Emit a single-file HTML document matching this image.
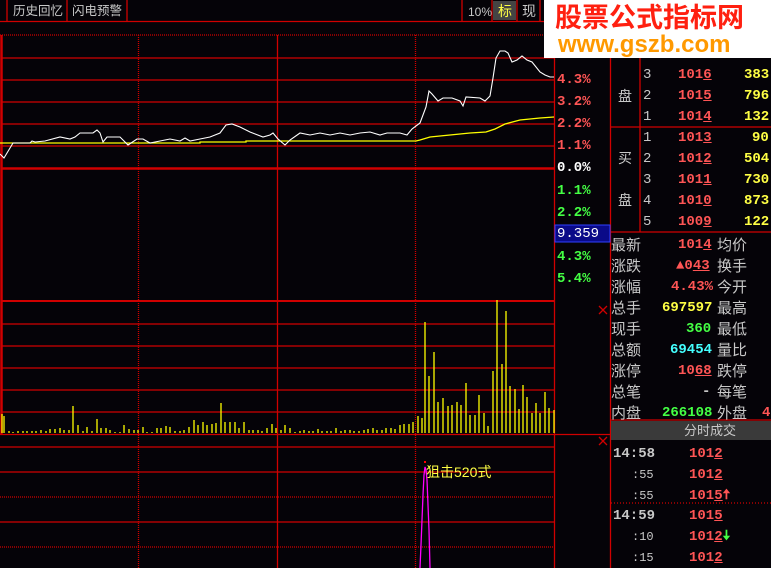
<!DOCTYPE html>
<html><head><meta charset="utf-8"><style>
body{margin:0;width:771px;height:568px;background:#050308;overflow:hidden;position:relative;font-family:"Liberation Sans","Noto Sans CJK SC",sans-serif;}
.t{position:absolute;white-space:nowrap;font-size:14px;line-height:16px;}
.g{color:#c8c8c8}.r{color:#ff5555}.y{color:#ffff44}.gr{color:#44ff44}.c{color:#44ffff}.w{color:#fff}
.n{font-family:"Liberation Mono","DejaVu Sans Mono",monospace;font-weight:bold;font-size:14px;}
u{text-decoration:underline;text-decoration-color:#ff5555}
</style></head><body>
<svg width="771" height="568" style="position:absolute;left:0;top:0">
<g stroke="#d00000" stroke-width="1.3" fill="none">
<line x1="0" y1="21.5" x2="610" y2="21.5"/>
<line x1="7" y1="0" x2="7" y2="21"/><line x1="67" y1="0" x2="67" y2="21"/><line x1="127" y1="0" x2="127" y2="21"/>
<line x1="462" y1="0" x2="462" y2="21"/><line x1="492" y1="0" x2="492" y2="21"/><line x1="517" y1="0" x2="517" y2="21"/><line x1="540" y1="0" x2="540" y2="21"/>
<line x1="0" y1="35" x2="555" y2="35" stroke-dasharray="1 1"/>
<line x1="2" y1="58" x2="555" y2="58"/><line x1="2" y1="80" x2="555" y2="80"/><line x1="2" y1="102" x2="555" y2="102"/><line x1="2" y1="124" x2="555" y2="124"/><line x1="2" y1="146" x2="555" y2="146"/>
<line x1="2" y1="168.5" x2="555" y2="168.5" stroke-width="2.5"/>
<line x1="2" y1="301" x2="555" y2="301" stroke-width="2"/><line x1="2" y1="324" x2="555" y2="324"/><line x1="2" y1="346" x2="555" y2="346"/><line x1="2" y1="368" x2="555" y2="368"/><line x1="2" y1="390" x2="555" y2="390"/><line x1="2" y1="412" x2="555" y2="412"/>
<line x1="0" y1="434.5" x2="610" y2="434.5"/>
<line x1="0" y1="447" x2="555" y2="447"/><line x1="0" y1="472" x2="555" y2="472"/><line x1="0" y1="497" x2="555" y2="497" stroke-dasharray="1 1"/><line x1="0" y1="522" x2="555" y2="522"/><line x1="0" y1="547" x2="555" y2="547" stroke-dasharray="1 1"/>
<line x1="1.5" y1="35" x2="1.5" y2="434" stroke-width="2.5"/>
<line x1="138.5" y1="35" x2="138.5" y2="568" stroke-dasharray="1 1"/>
<line x1="277.5" y1="35" x2="277.5" y2="568"/>
<line x1="415.5" y1="35" x2="415.5" y2="568" stroke-dasharray="1 1"/>
<line x1="554.5" y1="35" x2="554.5" y2="568"/>
<line x1="610.5" y1="0" x2="610.5" y2="568"/>
<line x1="611" y1="127" x2="771" y2="127"/><line x1="611" y1="232" x2="771" y2="232"/>
<line x1="640" y1="58" x2="640" y2="232"/>
<line x1="611" y1="420" x2="771" y2="420"/>
<line x1="611" y1="503" x2="771" y2="503" stroke-dasharray="1 2"/>
<path d="M599 306l8 8M607 306l-8 8M599 437l8 8M607 437l-8 8"/>
</g>
<rect x="555" y="225" width="55" height="17" fill="#0a0a88" stroke="#3040ff"/>
<rect x="493" y="1" width="23" height="19" fill="#444"/>
<rect x="611" y="421" width="160" height="19" fill="#3a3a3a"/>
<polyline fill="none" stroke="#ffff00" stroke-width="1.3" points="0,143 200,143 200,142 246,142 246,141 416,141 420,140 430,137 440,136 460,134 470,133 486,132 495,129 505,124 520,120 540,118 554,117"/>
<polyline fill="none" stroke="#fff" stroke-width="1.1" points="0,154 4,158 13,143 30,143 32,141 35,142 45,141 60,137 70,139 75,137 80,133 93,133 97,130 100,133 103,142 107,137 120,137 128,145 137,139 143,139 150,143 160,141 170,139 180,141 185,138 190,141 200,139 210,137 220,133 226,125 232,124 240,127 250,132 263,137 270,135 273,133 278,139 285,145 290,140 300,133 310,135 320,133 330,135 340,133 350,135 360,133 370,132 380,135 387,133 400,133 407,135 412,129 420,123 426,107 429,91 432,94 438,101 443,98 452,98 460,101 463,106 466,97 480,98 485,101 490,96 493,78 496,58 500,51 505,51 508,53 512,62 517,60 522,56 527,60 532,62 540,72 545,75 550,77 554,77"/>
<path stroke="#ffff00" stroke-width="1.3" fill="none" d="M2 433V414M4 433V416M9 433V431M13 433V432M18 433V431M23 433V431M27 433V431M32 433V431M36 433V431M41 433V430M46 433V431M50 433V429M55 433V429M60 433V428M64 433V430M69 433V430M73 433V406M78 433V425M83 433V431M87 433V427M92 433V431M97 433V419M101 433V428M106 433V428M110 433V430M115 433V432M120 433V432M124 433V425M129 433V429M134 433V430M138 433V430M143 433V427M147 433V432M152 433V432M157 433V428M161 433V428M166 433V426M170 433V427M175 433V431M180 433V431M184 433V430M189 433V427M194 433V420M198 433V425M203 433V422M207 433V425M212 433V424M216 433V423M221 433V403M225 433V422M230 433V422M235 433V422M239 433V428M244 433V422M249 433V430M253 433V430M258 433V430M262 433V431M267 433V428M272 433V424M276 433V428M281 433V430M285 433V425M290 433V428M295 433V432M300 433V431M304 433V430M309 433V431M313 433V431M318 433V429M322 433V431M327 433V431M331 433V431M336 433V428M341 433V431M345 433V430M350 433V430M354 433V431M359 433V431M364 433V430M368 433V429M373 433V428M377 433V430M382 433V430M386 433V428M391 433V428M395 433V429M400 433V425M404 433V424M409 433V424M413 433V422M418 433V416M422 433V418M425 433V322M429 433V376M434 433V352M438 433V402M443 433V398M448 433V406M452 433V405M457 433V402M461 433V405M466 433V383M470 433V415M475 433V415M479 433V395M484 433V413M488 433V426M493 433V371M497 433V300M502 433V364M506 433V311M510 433V386M515 433V389M519 433V409M523 433V385M527 433V397M532 433V413M536 433V403M540 433V413M545 433V392M549 433V408M554 433V410"/>
<polyline fill="none" stroke="#ff00ff" stroke-width="1.3" points="420,568 421,545 422,520 423,495 424,475 425,467 426,470 427,480 428,505 429,530 430,568"/>
<rect x="424" y="461" width="2" height="2" fill="#f00"/>
</svg>
<div class="t g" style="left:13px;top:3px;font-size:12.5px">历史回忆</div>
<div class="t g" style="left:72px;top:3px;font-size:12.5px">闪电预警</div>
<div class="t g" style="left:468px;top:4px;font-size:12px">10%</div>
<div class="t y" style="left:498px;top:3px">标</div>
<div class="t g" style="left:522px;top:3px">现</div>
<div style="position:absolute;left:544px;top:0;width:227px;height:58px;background:#fff"></div>
<div class="t" style="left:555px;top:3px;font-size:27px;line-height:30px;font-weight:bold;color:#ff2010">股票公式指标网</div>
<div class="t" style="left:558px;top:32px;font-size:24px;line-height:26px;font-weight:bold;color:#ff9900">www.gszb.com</div>
<div class="n r" style="position:absolute;left:557px;top:72px">4.3%</div>
<div class="n r" style="position:absolute;left:557px;top:94px">3.2%</div>
<div class="n r" style="position:absolute;left:557px;top:116px">2.2%</div>
<div class="n r" style="position:absolute;left:557px;top:138px">1.1%</div>
<div class="n w" style="position:absolute;left:557px;top:160px">0.0%</div>
<div class="n gr" style="position:absolute;left:557px;top:183px">1.1%</div>
<div class="n gr" style="position:absolute;left:557px;top:205px">2.2%</div>
<div class="n w" style="position:absolute;left:557px;top:226px;font-weight:normal">9.359</div>
<div class="n gr" style="position:absolute;left:557px;top:249px">4.3%</div>
<div class="n gr" style="position:absolute;left:557px;top:271px">5.4%</div>
<div class="t g" style="left:618px;top:88px">盘</div>
<div class="t g" style="left:618px;top:150px">买</div>
<div class="t g" style="left:618px;top:192px">盘</div>
<div style="position:absolute;left:0;top:0;font-size:0">
<div class="t g n" style="left:643px;top:67px;font-weight:normal">3</div><div class="n t r" style="left:678px;top:67px">101<u>6</u></div><div class="n t y" style="left:744px;top:67px">383</div>
<div class="t g n" style="left:643px;top:88px;font-weight:normal">2</div><div class="n t r" style="left:678px;top:88px">101<u>5</u></div><div class="n t y" style="left:744px;top:88px">796</div>
<div class="t g n" style="left:643px;top:109px;font-weight:normal">1</div><div class="n t r" style="left:678px;top:109px">101<u>4</u></div><div class="n t y" style="left:744px;top:109px">132</div>
<div class="t g n" style="left:643px;top:130px;font-weight:normal">1</div><div class="n t r" style="left:678px;top:130px">101<u>3</u></div><div class="n t y" style="left:752px;top:130px">90</div>
<div class="t g n" style="left:643px;top:151px;font-weight:normal">2</div><div class="n t r" style="left:678px;top:151px">101<u>2</u></div><div class="n t y" style="left:744px;top:151px">504</div>
<div class="t g n" style="left:643px;top:172px;font-weight:normal">3</div><div class="n t r" style="left:678px;top:172px">101<u>1</u></div><div class="n t y" style="left:744px;top:172px">730</div>
<div class="t g n" style="left:643px;top:193px;font-weight:normal">4</div><div class="n t r" style="left:678px;top:193px">101<u>0</u></div><div class="n t y" style="left:744px;top:193px">873</div>
<div class="t g n" style="left:643px;top:214px;font-weight:normal">5</div><div class="n t r" style="left:678px;top:214px">100<u>9</u></div><div class="n t y" style="left:744px;top:214px">122</div>
</div>
<div class="t g" style="left:611px;top:235px;font-size:15px;line-height:21px">最新<br>涨跌<br>涨幅<br>总手<br>现手<br>总额<br>涨停<br>总笔<br>内盘</div>
<div class="t g" style="left:717px;top:235px;font-size:15px;line-height:21px">均价<br>换手<br>今开<br>最高<br>最低<br>量比<br>跌停<br>每笔<br>外盘</div>
<div class="n t r" style="left:678px;top:237px">101<u>4</u></div>
<div class="n t r" style="left:676px;top:258px">▲0<u>43</u></div>
<div class="n t r" style="left:671px;top:279px">4.43%</div>
<div class="n t y" style="left:662px;top:300px">697597</div>
<div class="n t gr" style="left:686px;top:321px">360</div>
<div class="n t c" style="left:670px;top:342px">69454</div>
<div class="n t r" style="left:678px;top:363px">10<u>68</u></div>
<div class="n t g" style="left:702px;top:384px">-</div>
<div class="n t gr" style="left:662px;top:405px">266108</div>
<div class="n t r" style="left:762px;top:405px">4</div>
<div class="t g" style="left:684px;top:423px;font-size:13px">分时成交</div>
<div class="n t g" style="left:613px;top:446px">14:58</div>
<div class="n t g" style="left:632px;top:467px;font-weight:normal;font-size:12px">:55</div>
<div class="n t g" style="left:632px;top:488px;font-weight:normal;font-size:12px">:55</div>
<div class="n t g" style="left:613px;top:508px">14:59</div>
<div class="n t g" style="left:632px;top:529px;font-weight:normal;font-size:12px">:10</div>
<div class="n t g" style="left:632px;top:550px;font-weight:normal;font-size:12px">:15</div>
<div class="n t r" style="left:689px;top:446px">101<u>2</u></div>
<div class="n t r" style="left:689px;top:467px">101<u>2</u></div>
<div class="n t r" style="left:689px;top:488px">101<u>5</u>🠅</div>
<div class="n t r" style="left:689px;top:508px">101<u>5</u></div>
<div class="n t r" style="left:689px;top:529px">101<u>2</u><span class="gr">🠇</span></div>
<div class="n t r" style="left:689px;top:550px">101<u>2</u></div>
<div class="t y" style="left:426px;top:464px;font-size:14px">狙击520式</div>
</body></html>
